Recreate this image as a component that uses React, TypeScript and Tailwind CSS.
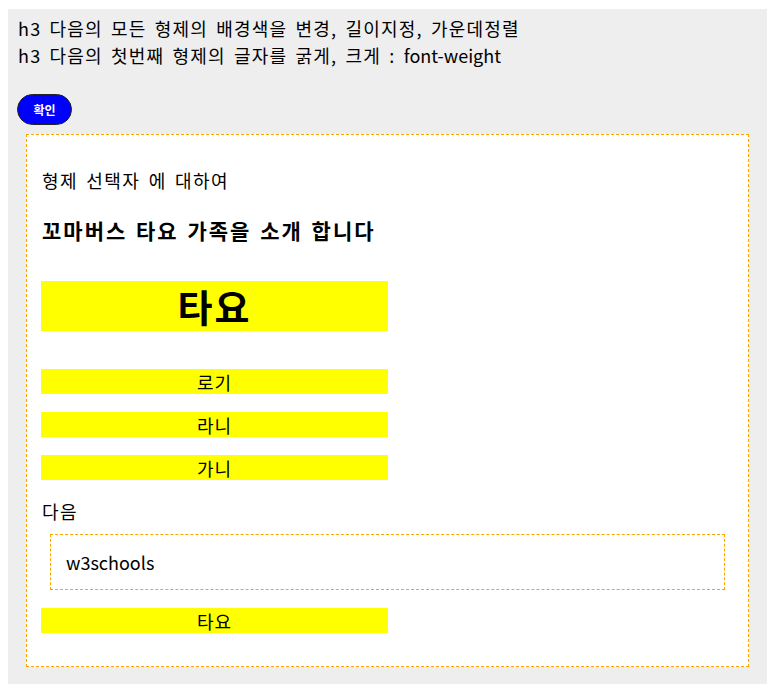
import React from 'react';

const App: React.FC = () => {
  const bars = ['로기', '라니', '가니'];

  return (
    <div className="pl-2 pr-[11px] pt-[9px] pb-[10px] font-['Noto_Sans_CJK_KR',sans-serif] text-black">
      <div className="bg-[#eeeeee] px-[10px] pt-[6px] pb-[17px]">
        <p className="text-[18px] leading-[27px] tracking-[1.2px] [word-spacing:3px]">
          h3 다음의 모든 형제의 배경색을 변경, 길이지정, 가운데정렬
        </p>
        <p className="text-[18px] leading-[27px] tracking-[1.2px] [word-spacing:3px]">
          h3 다음의 첫번째 형제의 글자를 굵게, 크게 : <span className="tracking-normal">font-weight</span>
        </p>

        <button className="mt-[25px] -ml-[1px] h-[31px] w-[55px] rounded-full border border-[#222] bg-[#0000ff] text-[12px] font-bold leading-none text-white">
          확인
        </button>

        <div className="mt-[9px] mx-[8px] border border-dashed border-[orange] bg-white px-[14px] pt-[32px] pb-[33px]">
          <p className="pl-[1px] text-[18px] leading-[27px] tracking-[1.4px] [word-spacing:3px]">형제 선택자 에 대하여</p>
          <h3 className="mt-[23px] pl-[1px] text-[21px] font-bold leading-[27px] tracking-[2px] [word-spacing:2px]">
            꼬마버스 타요 가족을 소개 합니다
          </h3>

          <div className="mt-[37px] flex h-[50px] w-[347px] items-center justify-center bg-[yellow] text-[38px] font-bold leading-none tracking-[2px]">
            타요
          </div>

          <div className="mt-[38px] flex flex-col gap-[18px]">
            {bars.map((b) => (
              <div
                key={b}
                className="flex h-[25px] w-[347px] items-center justify-center bg-[yellow] text-[18px] leading-none tracking-[1px]"
              >
                {b}
              </div>
            ))}
          </div>

          <p className="mt-[18px] pl-[1px] text-[18px] leading-[27px] tracking-[1.5px]">다음</p>

          <div className="mx-[9px] mt-[9px] flex h-[56px] items-center border border-dashed border-[orange] px-[15px] text-[18px]">
            w3schools
          </div>

          <div className="mt-[18px] flex h-[25px] w-[347px] items-center justify-center bg-[yellow] text-[18px] leading-none tracking-[1px]">
            타요
          </div>
        </div>
      </div>
    </div>
  );
};

export default App;
